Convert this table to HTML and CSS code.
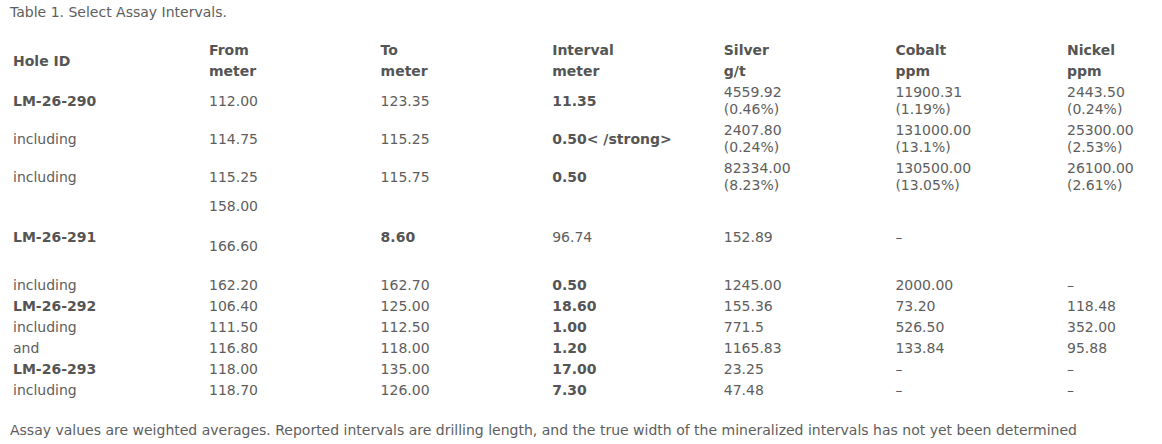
FILE: index.html
```html
<!DOCTYPE html>
<html>
<head>
<meta charset="utf-8">
<link rel="stylesheet" href="styles.css">
</head>
<body>
<div class="page">
  <p class="title">Table 1. Select Assay Intervals.</p>
  <table class="assay">
    <colgroup>
      <col class="c-id"><col class="c-n"><col class="c-n"><col class="c-n"><col class="c-n"><col class="c-n"><col class="c-last">
    </colgroup>
    <thead>
      <tr>
        <th>Hole ID</th>
        <th>From<br>meter</th>
        <th>To<br>meter</th>
        <th>Interval<br>meter</th>
        <th>Silver<br>g/t</th>
        <th>Cobalt<br>ppm</th>
        <th>Nickel<br>ppm</th>
      </tr>
    </thead>
    <tbody>
      <tr>
        <td><strong>LM-26-290</strong></td>
        <td>112.00</td>
        <td>123.35</td>
        <td><strong>11.35</strong></td>
        <td>4559.92<br>(0.46%)</td>
        <td>11900.31<br>(1.19%)</td>
        <td>2443.50<br>(0.24%)</td>
      </tr>
      <tr>
        <td>including</td>
        <td>114.75</td>
        <td>115.25</td>
        <td><strong>0.50&lt; /strong&gt;</strong></td>
        <td>2407.80<br>(0.24%)</td>
        <td>131000.00<br>(13.1%)</td>
        <td>25300.00<br>(2.53%)</td>
      </tr>
      <tr>
        <td>including</td>
        <td>115.25</td>
        <td>115.75</td>
        <td><strong>0.50</strong></td>
        <td>82334.00<br>(8.23%)</td>
        <td>130500.00<br>(13.05%)</td>
        <td>26100.00<br>(2.61%)</td>
      </tr>
      <tr>
        <td></td>
        <td>158.00</td>
        <td></td><td></td><td></td><td></td><td></td>
      </tr>
      <tr class="tall">
        <td><strong>LM-26-291</strong><br>&nbsp;</td>
        <td>166.60</td>
        <td><strong>8.60</strong><br>&nbsp;</td>
        <td>96.74<br>&nbsp;</td>
        <td>152.89<br>&nbsp;</td>
        <td>–<br>&nbsp;</td>
        <td></td>
      </tr>
      <tr>
        <td>including</td>
        <td>162.20</td>
        <td>162.70</td>
        <td><strong>0.50</strong></td>
        <td>1245.00</td>
        <td>2000.00</td>
        <td>–</td>
      </tr>
      <tr>
        <td><strong>LM-26-292</strong></td>
        <td>106.40</td>
        <td>125.00</td>
        <td><strong>18.60</strong></td>
        <td>155.36</td>
        <td>73.20</td>
        <td>118.48</td>
      </tr>
      <tr>
        <td>including</td>
        <td>111.50</td>
        <td>112.50</td>
        <td><strong>1.00</strong></td>
        <td>771.5</td>
        <td>526.50</td>
        <td>352.00</td>
      </tr>
      <tr>
        <td>and</td>
        <td>116.80</td>
        <td>118.00</td>
        <td><strong>1.20</strong></td>
        <td>1165.83</td>
        <td>133.84</td>
        <td>95.88</td>
      </tr>
      <tr>
        <td><strong>LM-26-293</strong></td>
        <td>118.00</td>
        <td>135.00</td>
        <td><strong>17.00</strong></td>
        <td>23.25</td>
        <td>–</td>
        <td>–</td>
      </tr>
      <tr>
        <td>including</td>
        <td>118.70</td>
        <td>126.00</td>
        <td><strong>7.30</strong></td>
        <td>47.48</td>
        <td>–</td>
        <td>–</td>
      </tr>
    </tbody>
  </table>
  <p class="note">Assay values are weighted averages. Reported intervals are drilling length, and the true width of the mineralized intervals has not yet been determined</p>
</div>
</body>
</html>
```
FILE: styles.css
```css
html, body {
  margin: 0;
  padding: 0;
  background: #ffffff;
}
body {
  font-family: "DejaVu Sans", Verdana, sans-serif;
  font-size: 14px;
  line-height: 17px;
  color: #5e5e5e;
}
.page {
  padding: 4px 10px 0 10px;
}
.title {
  margin: 0;
  font-size: 14px;
}
.assay {
  margin-top: 19px;
  border-collapse: collapse;
  border-spacing: 0;
  table-layout: fixed;
  width: 1142px;
}
.c-id { width: 196px; }
.c-n { width: 171.6px; }
.assay th {
  text-align: left;
  font-weight: bold;
  color: #555;
  line-height: 21px;
  padding: 0 3px;
  vertical-align: middle;
}
.assay td {
  padding: 2px 3px;
  vertical-align: middle;
  white-space: nowrap;
}
.assay strong {
  color: #555;
}
.assay tr.tall td {
  height: 54px;
}
.note {
  margin: 21px 0 0 0;
}
```
